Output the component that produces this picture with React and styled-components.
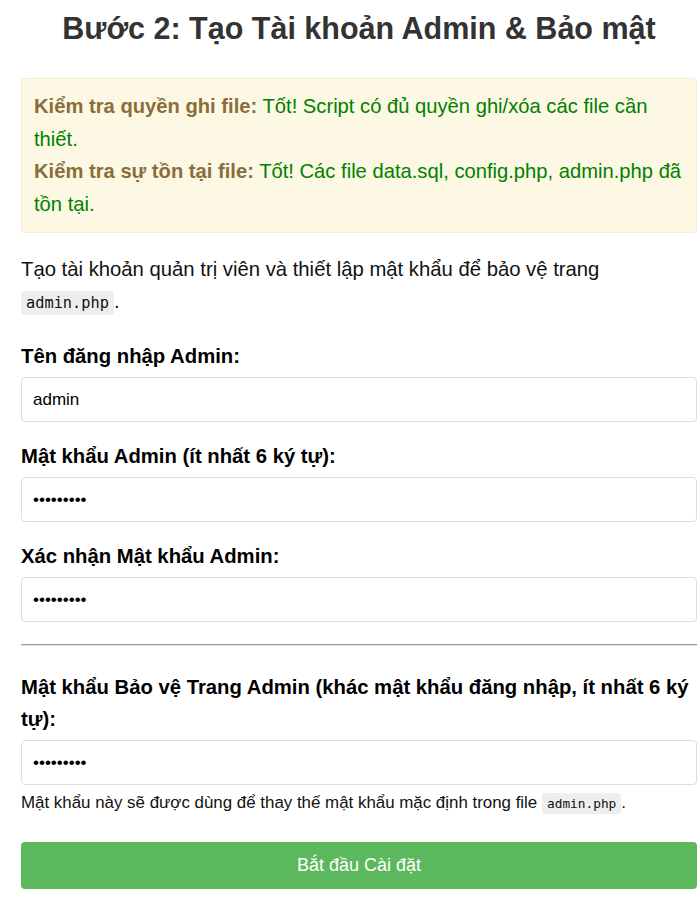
import React from 'react';
import styled, { createGlobalStyle } from 'styled-components';

const GlobalStyle = createGlobalStyle`
  body {
    margin: 0;
    background: #fff;
    font-family: "Liberation Sans", Arial, sans-serif;
    color: #000;
  }
`;

const Container = styled.div`
  padding: 0 3px 20px 21px;
`;

const Title = styled.h2`
  margin: 0;
  padding: 10px 0 0;
  font-size: 30.5px;
  line-height: 36px;
  font-weight: bold;
  color: #333;
  text-align: center;
`;

const Alert = styled.div`
  margin-top: 32px;
  padding: 11px 6px 12px 12px;
  background: #fcf8e3;
  border: 1px solid #faebcc;
  border-radius: 4px;
  font-size: 20.2px;
  line-height: 32.5px;
  color: #008000;
`;

const AlertLabel = styled.strong`
  color: #8a6d3b;
`;

const Intro = styled.p`
  margin: 20px 0 21px;
  font-size: 20.3px;
  line-height: 32px;
  color: #111;
`;

const Code = styled.code`
  font-family: "DejaVu Sans Mono", monospace;
  font-size: ${(p) => (p.small ? '12.8px' : '15.3px')};
  background: #eee;
  padding: 3px 5px;
  border-radius: 3px;
`;

const Field = styled.div`
  margin-bottom: ${(p) => p.gap || '18px'};
`;

const Label = styled.label`
  display: block;
  font-size: 20.3px;
  line-height: 32px;
  font-weight: bold;
  margin-bottom: 5px;
`;

const Input = styled.input`
  display: block;
  box-sizing: border-box;
  width: 100%;
  height: 45px;
  padding: 0 11px;
  border: 1px solid #ddd;
  border-radius: 4px;
  font-family: "Liberation Sans", Arial, sans-serif;
  font-size: 17px;
  color: #000;
  background: #fff;
  outline: none;
`;

const Divider = styled.hr`
  border: 0;
  border-top: 1px solid #999;
  border-bottom: 1px solid #e4e4e4;
  margin: 22px 0 25px;
`;

const Help = styled.small`
  display: block;
  margin-top: 4px;
  font-size: 16.9px;
  line-height: 28px;
  color: #111;
`;

const Button = styled.button`
  display: block;
  width: 100%;
  height: 47px;
  margin-top: 24px;
  border: 0;
  border-radius: 4px;
  background: #5cb85c;
  color: #fff;
  font-family: "Liberation Sans", Arial, sans-serif;
  font-size: 18px;
`;

export default function App() {
  return (
    <Container>
      <GlobalStyle />
      <Title>Bước 2: Tạo Tài khoản Admin &amp; Bảo mật</Title>
      <Alert>
        <div>
          <AlertLabel>Kiểm tra quyền ghi file:</AlertLabel> Tốt! Script có đủ quyền ghi/xóa các file cần thiết.
        </div>
        <div>
          <AlertLabel>Kiểm tra sự tồn tại file:</AlertLabel> Tốt! Các file data.sql, config.php, admin.php đã tồn tại.
        </div>
      </Alert>
      <Intro>
        Tạo tài khoản quản trị viên và thiết lập mật khẩu để bảo vệ trang <Code>admin.php</Code>.
      </Intro>
      <Field>
        <Label>Tên đăng nhập Admin:</Label>
        <Input type="text" defaultValue="admin" />
      </Field>
      <Field>
        <Label>Mật khẩu Admin (ít nhất 6 ký tự):</Label>
        <Input type="password" defaultValue="123456789" />
      </Field>
      <Field gap="0">
        <Label>Xác nhận Mật khẩu Admin:</Label>
        <Input type="password" defaultValue="123456789" />
      </Field>
      <Divider />
      <Field gap="0">
        <Label>Mật khẩu Bảo vệ Trang Admin (khác mật khẩu đăng nhập, ít nhất 6 ký tự):</Label>
        <Input type="password" defaultValue="123456789" />
        <Help>
          Mật khẩu này sẽ được dùng để thay thế mật khẩu mặc định trong file <Code small>admin.php</Code>.
        </Help>
      </Field>
      <Button type="button">Bắt đầu Cài đặt</Button>
    </Container>
  );
}
